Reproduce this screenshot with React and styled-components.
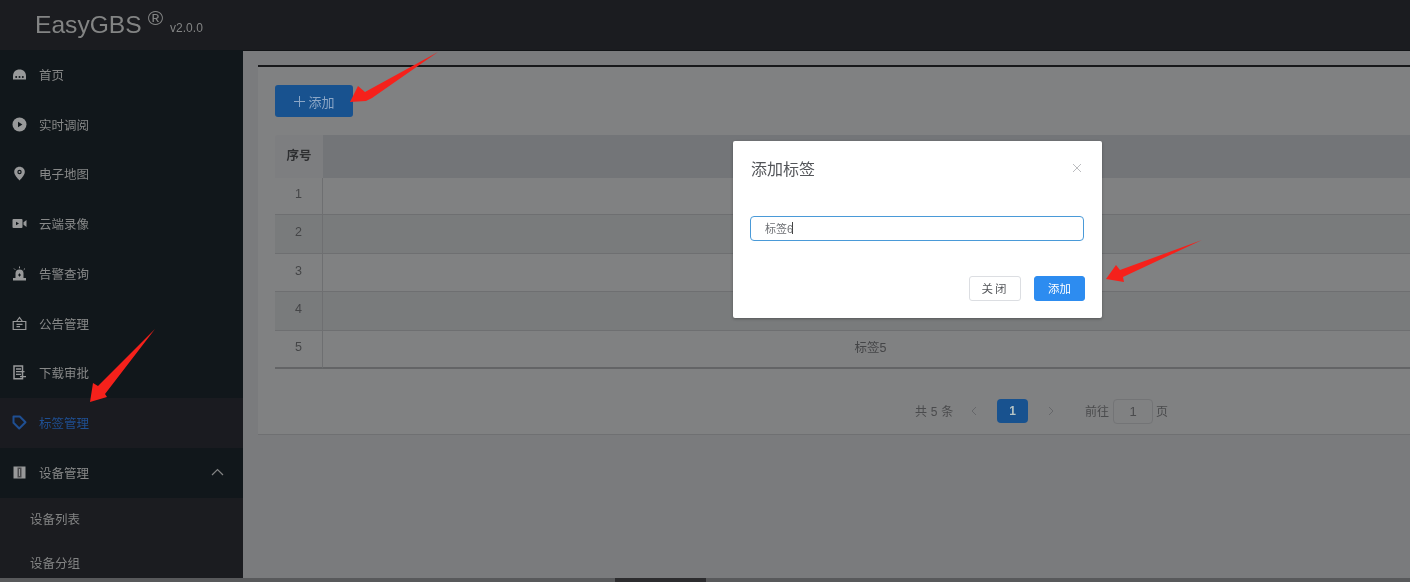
import React from "react";
import styled, { createGlobalStyle } from "styled-components";

const Global = createGlobalStyle`
  html, body { margin: 0; padding: 0; background: #79797b; }
  * { box-sizing: border-box; }
  body { font-family: "Liberation Sans", "Noto Sans CJK SC", sans-serif; }
`;

const Page = styled.div`
  position: relative;
  width: 1410px;
  height: 582px;
  overflow: hidden;
  display: flex;
  flex-direction: column;
  filter: blur(0.4px);
`;
const Header = styled.header`
  flex: none;
  height: 50px;
  background: #1b1c20;
  display: flex;
  align-items: flex-start;
  padding-left: 35px;
  color: #838484;
`;
const Brand = styled.span`
  font-size: 24.6px;
  line-height: 28px;
  margin-top: 11px;
`;
const Reg = styled.span`
  font-size: 21px;
  line-height: 20px;
  margin: 8px 0 0 6px;
`;
const Version = styled.span`
  font-size: 12px;
  line-height: 14px;
  margin: 21px 0 0 7px;
`;
const Body = styled.div`
  flex: 1;
  min-height: 0;
  display: flex;
`;
const Sidebar = styled.nav`
  flex: none;
  width: 243px;
  background: #11171b;
  overflow: hidden;
`;
const MenuRow = styled.div`
  height: 49.75px;
  display: flex;
  align-items: center;
  padding: 0 0 1px 12px;
  font-size: 12.5px;
  color: ${(p) => (p.$active ? "#1f4f92" : "#878888")};
  background: ${(p) => (p.$active ? "#1a1b20" : "transparent")};
`;
const IconBox = styled.span`
  flex: none;
  width: 15px;
  height: 15px;
  margin-right: 12px;
  display: block;
  svg { display: block; width: 15px; height: 15px; }
`;
const Chevron = styled.svg`
  width: 13px;
  height: 8px;
  margin-left: auto;
  margin-right: 19px;
`;
const SubMenu = styled.div`
  background: #1b1c20;
`;
const SubRow = styled.div`
  height: 44px;
  display: flex;
  align-items: center;
  padding: 0 0 2px 30px;
  font-size: 12.5px;
  color: #838484;
`;
const Main = styled.main`
  flex: 1;
  min-width: 0;
  background: #7a7b7d;
  border-top: 1px solid #111316;
  padding: 14px 0 0 15px;
  overflow: hidden;
`;
const Card = styled.section`
  width: 1190px;
  height: 370px;
  background: #808182;
  border-top: 2px solid #17181a;
  border-bottom: 1px solid #6f7072;
  padding: 18px 30px 0 17px;
`;
const AddButton = styled.button`
  display: flex;
  align-items: center;
  justify-content: center;
  gap: 3px;
  width: 78px;
  height: 32px;
  padding: 0 0 0 1px;
  border: 0;
  border-radius: 3px;
  background: #18528f;
  color: #8ba6c6;
  font: 13px "Liberation Sans", "Noto Sans CJK SC", sans-serif;
  svg { display: block; }
`;
const Table = styled.table`
  width: 100%;
  margin-top: 18px;
  border-collapse: separate;
  border-spacing: 0;
  table-layout: fixed;
  font-size: 12.5px;
  color: #444547;
`;
const HeadCell = styled.th`
  height: 43px;
  padding: 0 0 5px;
  font-weight: 700;
  color: #2e2f31;
  text-align: center;
  background: ${(p) => (p.$first ? "#7d7e80" : "#737578")};
  border-radius: ${(p) => (p.$first ? "3px 0 0 0" : "0")};
`;
const DataRow = styled.tr`
  background: ${(p) => (p.$striped ? "#797b7c" : "#808182")};
`;
const IndexCell = styled.td`
  height: ${(p) => p.$h}px;
  padding: 0 0 4px;
  text-align: center;
  border-right: 1px solid #6e6f71;
  border-bottom: ${(p) => (p.$last ? "2px solid #636466" : "1px solid #6e6f71")};
`;
const LabelCell = styled.td`
  padding: 0 0 6px;
  text-align: center;
  border-bottom: ${(p) => (p.$last ? "2px solid #636466" : "1px solid #6e6f71")};
`;
const Pager = styled.div`
  display: flex;
  align-items: center;
  height: 24px;
  margin: 30px 0 0 640px;
  font-size: 12px;
  color: #4a4b4d;
  white-space: nowrap;
`;
const PagerTotal = styled.span`
  width: 37px;
  letter-spacing: 0.2px;
  margin-top: -2px;
`;
const PagerArrow = styled.svg`
  flex: none;
  width: 7px;
  height: 10px;
  margin-left: ${(p) => p.$ml}px;
`;
const PageNumber = styled.span`
  flex: none;
  width: 31px;
  height: 24px;
  margin-left: 20px;
  border-radius: 4px;
  background: #18528f;
  color: #b6c4c4;
  font-weight: 700;
  display: flex;
  align-items: center;
  justify-content: center;
`;
const JumpLabel = styled.span`
  width: 24px;
  margin: -2px 0 0 30px;
`;
const JumpInput = styled.span`
  flex: none;
  width: 40px;
  height: 25px;
  margin-left: 4px;
  border: 1px solid #737476;
  border-radius: 4px;
  display: flex;
  align-items: center;
  justify-content: center;
  font-size: 13px;
`;
const JumpUnit = styled.span`
  margin: -2px 0 0 3px;
`;
const ScrollTrack = styled.div`
  flex: none;
  height: 4px;
  background: #58595b;
  padding-left: 615px;
`;
const ScrollThumb = styled.div`
  width: 91px;
  height: 4px;
  background: #2c2c2e;
`;
const Dialog = styled.div`
  position: absolute;
  left: 733px;
  top: 141px;
  width: 369px;
  height: 177px;
  background: #fff;
  border-radius: 2px;
  box-shadow: 0 1px 3px rgba(0, 0, 0, 0.3);
  padding: 16px 18px 0 18px;
`;
const DialogHead = styled.div`
  display: flex;
  align-items: center;
  justify-content: space-between;
  height: 22px;
`;
const DialogTitle = styled.h2`
  margin: 0;
  font-size: 16px;
  font-weight: 400;
  color: #54565a;
`;
const CloseIcon = styled.svg`
  width: 10px;
  height: 10px;
  margin-right: 2px;
`;
const NameField = styled.div`
  width: 334px;
  height: 25px;
  margin: 37px 0 0 -1px;
  border: 1px solid #4a9ad8;
  border-radius: 4px;
  padding: 0 0 2px 14px;
  display: flex;
  align-items: center;
  font-size: 11px;
  color: #6f7175;
`;
const Caret = styled.span`
  width: 1px;
  height: 12px;
  background: #444;
  margin-left: -1px;
`;
const DialogFoot = styled.div`
  display: flex;
  justify-content: flex-end;
  gap: 13px;
  margin: 35px -1px 0 0;
`;
const DialogButton = styled.button`
  width: ${(p) => (p.$primary ? "51px" : "52px")};
  height: 25px;
  padding: 0 0 2px;
  border-radius: 3px;
  border: 1px solid ${(p) => (p.$primary ? "#2d8cf0" : "#dcdee2")};
  background: ${(p) => (p.$primary ? "#2d8cf0" : "#fff")};
  color: ${(p) => (p.$primary ? "#fff" : "#55575b")};
  font: 11.5px "Liberation Sans", "Noto Sans CJK SC", sans-serif;
  letter-spacing: ${(p) => (p.$primary ? "0" : "2px")};
`;
const Arrows = styled.svg`
  position: absolute;
  left: 0;
  top: 0;
  width: 1410px;
  height: 582px;
  pointer-events: none;
`;

const fill = "#98999a";
const icons = {
  home: (
    <svg viewBox="0 0 15 15"><path fill={fill} d="M7.500 2.500C3.600 2.500 1 5.200 1 9v3.500h13V9c0-3.800-2.600-6.500-6.500-6.500z" /><circle cx="4.200" cy="10" r="1" fill="#11171b" /><circle cx="10.800" cy="10" r="1" fill="#11171b" /><circle cx="7.500" cy="10" r="1" fill="#11171b" /></svg>
  ),
  play: (
    <svg viewBox="0 0 15 15"><circle cx="7.500" cy="7.500" r="7" fill={fill} /><path fill="#11171b" d="M6 4.800l4.400 2.700L6 10.200z" /></svg>
  ),
  pin: (
    <svg viewBox="0 0 15 15"><path fill={fill} d="M7.500.8C4.500.8 2.200 3 2.200 6c0 3.600 5.300 8.400 5.300 8.400S12.800 9.600 12.800 6C12.800 3 10.500.8 7.500.8z" /><circle cx="7.500" cy="6" r="2.200" fill="#11171b" /><circle cx="7.500" cy="6" r="1" fill={fill} /></svg>
  ),
  video: (
    <svg viewBox="0 0 15 15"><rect x="0.500" y="3" width="10" height="9" rx="1" fill={fill} /><path fill={fill} d="M11.500 6.200L14.500 4v7l-3-2.200z" /><path fill="#11171b" d="M4 5.700l3 1.800-3 1.800z" /></svg>
  ),
  alarm: (
    <svg viewBox="0 0 15 15"><path fill={fill} d="M3.500 12.500V7.500a4 4 0 0 1 8 0v5z" /><rect x="1" y="12" width="13" height="2.500" fill={fill} /><path stroke={fill} strokeWidth="1" d="M7.500.5v1.800M2 2.500l1.300 1.300M13 2.500l-1.300 1.300" /><path stroke="#11171b" strokeWidth="1" d="M6 9h3M7.500 7.500v3" /></svg>
  ),
  notice: (
    <svg viewBox="0 0 15 15"><path fill="none" stroke={fill} strokeWidth="1.200" d="M1.200 5.500h12.600v8H1.200zM4.500 5.500L7.500 1.500l3 4" /><path stroke={fill} strokeWidth="1.200" d="M4.500 8.300h6M4.500 10.700h3.500" /></svg>
  ),
  doc: (
    <svg viewBox="0 0 15 15"><path fill="none" stroke={fill} strokeWidth="1.500" d="M2 1h8.500v12.800H2z" /><path stroke={fill} strokeWidth="1.300" d="M4 4h5M4 6.700h8.500M4 9.400h5M8 11.700h6" /></svg>
  ),
  tag: (
    <svg viewBox="0 0 15 15"><path fill="none" stroke="#1f4f92" strokeWidth="2" strokeLinejoin="round" d="M1.500 1.500h6.300l5.700 5.700-6.300 6.300-5.700-5.700z" /></svg>
  ),
  device: (
    <svg viewBox="0 0 15 15"><rect x="1.500" y="1.500" width="12" height="12" fill={fill} /><rect x="5.500" y="2.500" width="4" height="10" fill="#4a4b4d" /><rect x="7" y="4" width="1" height="7" fill={fill} /></svg>
  ),
};

const menu = [
  ["home", "首页"],
  ["play", "实时调阅"],
  ["pin", "电子地图"],
  ["video", "云端录像"],
  ["alarm", "告警查询"],
  ["notice", "公告管理"],
  ["doc", "下载审批"],
  ["tag", "标签管理", true],
];

const rows = [
  [1, 37],
  [2, 39],
  [3, 38],
  [4, 39],
  [5, 38],
];

export default function App() {
  return (
    <Page>
      <Global />
      <Header>
        <Brand>EasyGBS</Brand>
        <Reg>®</Reg>
        <Version>v2.0.0</Version>
      </Header>
      <Body>
        <Sidebar>
          {menu.map(([icon, label, active]) => (
            <MenuRow key={label} $active={active}>
              <IconBox>{icons[icon]}</IconBox>
              {label}
            </MenuRow>
          ))}
          <MenuRow>
            <IconBox>{icons.device}</IconBox>
            设备管理
            <Chevron viewBox="0 0 13 8">
              <path d="M1 7l5.500-5.500L12 7" fill="none" stroke="#838484" strokeWidth="1.200" />
            </Chevron>
          </MenuRow>
          <SubMenu>
            <SubRow>设备列表</SubRow>
            <SubRow>设备分组</SubRow>
          </SubMenu>
        </Sidebar>
        <Main>
          <Card>
            <AddButton>
              <svg width="11" height="11" viewBox="0 0 11 11">
                <path d="M5.500 0v11M0 5.500h11" stroke="#8ba6c6" strokeWidth="1" />
              </svg>
              添加
            </AddButton>
            <Table>
              <colgroup>
                <col width="48" />
                <col />
              </colgroup>
              <thead>
                <tr>
                  <HeadCell $first>序号</HeadCell>
                  <HeadCell />
                </tr>
              </thead>
              <tbody>
                {rows.map(([n, h]) => (
                  <DataRow key={n} $striped={n % 2 === 0}>
                    <IndexCell $h={h} $last={n === 5}>{n}</IndexCell>
                    <LabelCell $last={n === 5}>标签{n}</LabelCell>
                  </DataRow>
                ))}
              </tbody>
            </Table>
            <Pager>
              <PagerTotal>共 5 条</PagerTotal>
              <PagerArrow viewBox="0 0 7 10" $ml={18}>
                <path d="M6 1L2 5l4 4" fill="none" stroke="#66676a" strokeWidth="1" />
              </PagerArrow>
              <PageNumber>1</PageNumber>
              <PagerArrow viewBox="0 0 7 10" $ml={20}>
                <path d="M1 1l4 4-4 4" fill="none" stroke="#66676a" strokeWidth="1" />
              </PagerArrow>
              <JumpLabel>前往</JumpLabel>
              <JumpInput>1</JumpInput>
              <JumpUnit>页</JumpUnit>
            </Pager>
          </Card>
        </Main>
      </Body>
      <ScrollTrack>
        <ScrollThumb />
      </ScrollTrack>
      <Dialog>
        <DialogHead>
          <DialogTitle>添加标签</DialogTitle>
          <CloseIcon viewBox="0 0 10 10">
            <path d="M1 1l8 8M9 1l-8 8" stroke="#bcbdc0" strokeWidth="1" />
          </CloseIcon>
        </DialogHead>
        <NameField>
          标签6
          <Caret />
        </NameField>
        <DialogFoot>
          <DialogButton>关闭</DialogButton>
          <DialogButton $primary>添加</DialogButton>
        </DialogFoot>
      </Dialog>
      <Arrows viewBox="0 0 1410 582">
        <polygon fill="#f5211b" points="438,52 365,92 358,86 350,102 366,101 372,98" />
        <polygon fill="#f5211b" points="155,329 98,386 93,383 90,402 107,397 105,394" />
        <polygon fill="#f5211b" points="1202,240 1120,270 1116,265 1106,279 1124,282 1123,277" />
      </Arrows>
    </Page>
  );
}
